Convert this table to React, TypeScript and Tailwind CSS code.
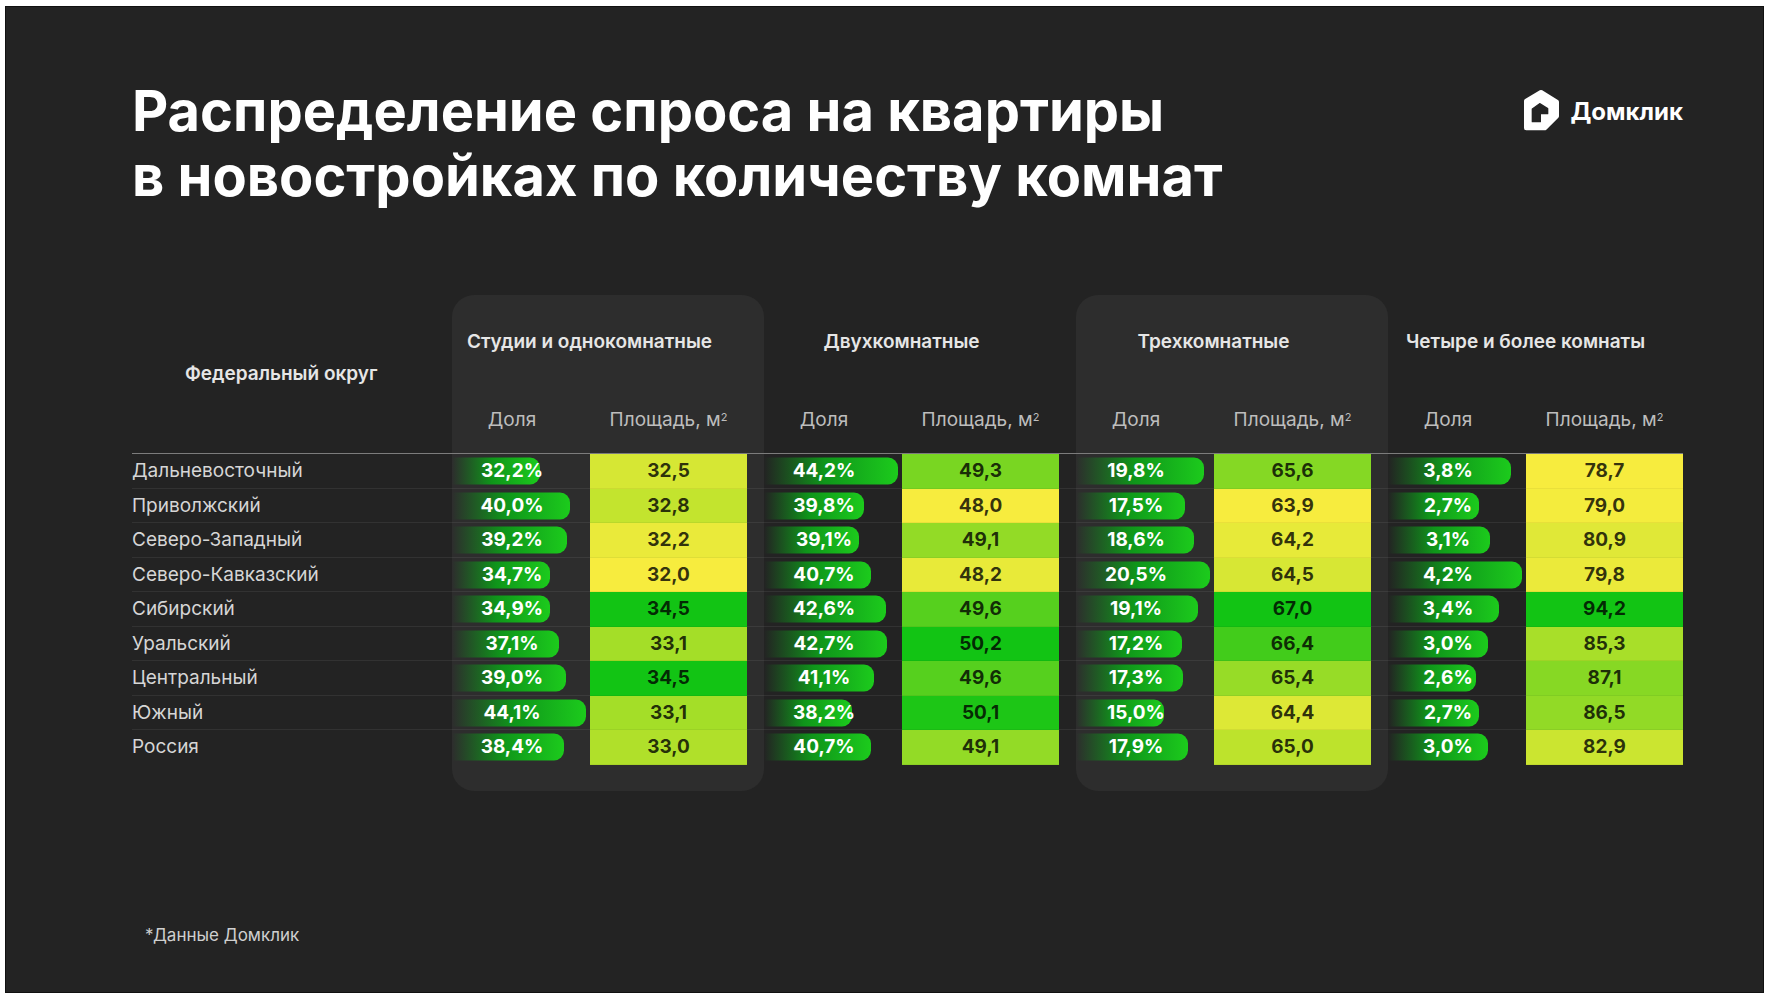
const regions = [
  "Дальневосточный",
  "Приволжский",
  "Северо-Западный",
  "Северо-Кавказский",
  "Сибирский",
  "Уральский",
  "Центральный",
  "Южный",
  "Россия",
];

const groups = [
  {
    title: "Студии и однокомнатные",
    panel: true,
    share: [32.2, 40.0, 39.2, 34.7, 34.9, 37.1, 39.0, 44.1, 38.4],
    area: [32.5, 32.8, 32.2, 32.0, 34.5, 33.1, 34.5, 33.1, 33.0],
  },
  {
    title: "Двухкомнатные",
    panel: false,
    share: [44.2, 39.8, 39.1, 40.7, 42.6, 42.7, 41.1, 38.2, 40.7],
    area: [49.3, 48.0, 49.1, 48.2, 49.6, 50.2, 49.6, 50.1, 49.1],
  },
  {
    title: "Трехкомнатные",
    panel: true,
    share: [19.8, 17.5, 18.6, 20.5, 19.1, 17.2, 17.3, 15.0, 17.9],
    area: [65.6, 63.9, 64.2, 64.5, 67.0, 66.4, 65.4, 64.4, 65.0],
  },
  {
    title: "Четыре и более комнаты",
    panel: false,
    share: [3.8, 2.7, 3.1, 4.2, 3.4, 3.0, 2.6, 2.7, 3.0],
    area: [78.7, 79.0, 80.9, 79.8, 94.2, 85.3, 87.1, 86.5, 82.9],
  },
];

const fmt = (v: number) => v.toFixed(1).replace(".", ",");

// yellow -> green scale for the area cells
const stops: [number, number[]][] = [
  [0, [247, 236, 62]],
  [0.35, [190, 227, 44]],
  [0.6, [118, 213, 34]],
  [1, [18, 196, 20]],
];

function heat(t: number) {
  for (let i = 1; i < stops.length; i++) {
    const [t1, c1] = stops[i];
    const [t0, c0] = stops[i - 1];
    if (t <= t1) {
      const k = (t - t0) / (t1 - t0);
      const c = c0.map((v, j) => Math.round(v + (c1[j] - v) * k));
      return `rgb(${c[0]}, ${c[1]}, ${c[2]})`;
    }
  }
  return "rgb(18, 196, 20)";
}

function Logo() {
  return (
    <div className="flex items-center gap-[4px]">
      <svg width="50" height="54" viewBox="0 0 150 162" aria-hidden="true">
        <path
          fill="#ffffff"
          stroke="#ffffff"
          strokeWidth="14"
          strokeLinejoin="round"
          d="M72 22 L119 51 L119 93 L83 129 L28 129 L28 48 Z"
        />
        <path
          fill="#232323"
          stroke="#232323"
          strokeWidth="4"
          strokeLinejoin="round"
          d="M46 72 L68 56 L92 71 L92 86 L70 86 L70 110 L46 110 Z"
        />
      </svg>
      <span className="text-[24px] font-bold leading-none text-white">Домклик</span>
    </div>
  );
}

function Group({ g, last }: { g: (typeof groups)[number]; last: boolean }) {
  const sMin = Math.min(...g.share);
  const sMax = Math.max(...g.share);
  const aMin = Math.min(...g.area);
  const aMax = Math.max(...g.area);

  return (
    <div
      className={`flex flex-col pb-[26px] ${last ? "w-[295px]" : "w-[312px]"} ${
        g.panel ? "rounded-[22px] bg-[#2d2d2d]" : ""
      }`}
    >
      <div className="flex h-[158px] w-[295px] flex-col">
        <div className="whitespace-nowrap pr-[20px] pt-[35px] text-center text-[19px] font-semibold leading-[24px] text-[#e6e6e6]">
          {g.title}
        </div>
        <div className="mt-[54px] grid grid-cols-[120px_18px_157px] text-[19px] leading-[24px] text-[#bdbdbd]">
          <div className="text-center">Доля</div>
          <div />
          <div className="text-center">
            Площадь, м<sup className="text-[11px]">2</sup>
          </div>
        </div>
      </div>
      <div className={`h-px bg-[#7c7c7c] ${last ? "w-[295px]" : "w-full"}`} />
      {g.share.map((s, i) => {
        const w = 88 + ((s - sMin) / (sMax - sMin)) * 46;
        const t = (g.area[i] - aMin) / (aMax - aMin);
        return (
          <div
            key={i}
            className={`grid h-[34.5px] grid-cols-[138px_157px_17px] ${
              i < 8 ? "shadow-[inset_0_-1px_0_rgba(255,255,255,0.07)]" : ""
            }`}
          >
            <div className="relative flex items-center">
              <div
                className="absolute left-0 top-1/2 h-[27px] -translate-y-1/2 rounded-r-[10px] bg-linear-to-r from-transparent via-[#0f951a] via-45% to-[#1ccb1c]"
                style={{ width: `${w}px` }}
              />
              <span className="relative w-[120px] text-center text-[19px] font-bold text-white">
                {fmt(s)}%
              </span>
            </div>
            <div
              className="flex items-center justify-center text-[19px] font-bold text-black/80 shadow-[inset_0_-1px_0_rgba(0,0,0,0.05)]"
              style={{ backgroundColor: heat(t) }}
            >
              {fmt(g.area[i])}
            </div>
            <div />
          </div>
        );
      })}
    </div>
  );
}

export default function App() {
  return (
    <div
      className="h-[1000px] w-[1770px] bg-white pl-[5px] pr-[6px] pt-[6px]"
      style={{ fontFamily: "Inter, 'Noto Sans', sans-serif" }}
    >
      <div className="flex h-[987px] flex-col border border-[#111] bg-[#232323] pl-[126px] pr-[80px]">
        <div className="flex items-start justify-between pt-[72px]">
          <h1 className="text-[56px] font-bold leading-[65px] text-white">
            Распределение спроса на квартиры
            <br />в новостройках по количеству комнат
          </h1>
          <div className="pt-[6px]">
            <Logo />
          </div>
        </div>

        <div className="mt-[86px] flex">
          <div className="flex w-[320px] flex-col">
            <div className="flex h-[158px] items-center pl-[53px] text-[19px] font-semibold text-[#e6e6e6]">
              Федеральный округ
            </div>
            <div className="h-px bg-[#7c7c7c]" />
            {regions.map((r, i) => (
              <div
                key={r}
                className={`flex h-[34.5px] items-center text-[19px] text-[#d6d6d6] ${
                  i < 8 ? "shadow-[inset_0_-1px_0_rgba(255,255,255,0.07)]" : ""
                }`}
              >
                {r}
              </div>
            ))}
          </div>
          {groups.map((g, i) => (
            <Group key={g.title} g={g} last={i === groups.length - 1} />
          ))}
        </div>

        <div className="mt-auto pb-[44px] pl-[13px] text-[17px] text-[#cfcfcf]">*Данные Домклик</div>
      </div>
    </div>
  );
}
